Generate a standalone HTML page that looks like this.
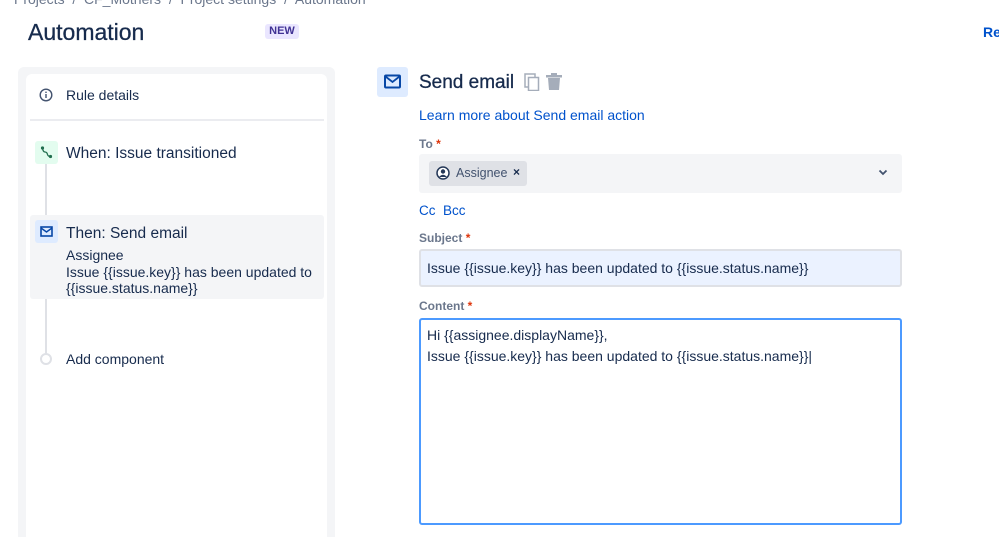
<!DOCTYPE html>
<html><head><meta charset="utf-8"><style>
*{box-sizing:border-box;margin:0;padding:0}
html,body{width:999px;height:537px;overflow:hidden}
body{background:#fff;font-family:"Liberation Sans",sans-serif;color:#172b4d;position:relative}
.a{position:absolute;white-space:nowrap}
.lbl{font-size:12px;font-weight:bold;color:#6b778c}
.lbl b{color:#de350b}
.link{color:#0052cc}
</style></head><body>
<div class="a" style="left:14px;top:-9px;font-size:14px;color:#6b778c">Projects &nbsp;/&nbsp; CF_Mothers &nbsp;/&nbsp; Project settings &nbsp;/&nbsp; Automation</div>
<div class="a" style="left:28px;top:19px;font-size:23px;font-weight:500;-webkit-text-stroke:0.3px #172b4d">Automation</div>
<div class="a" style="left:265px;top:24px;width:34px;height:15px;background:#eae6ff;border-radius:3px;font-size:11px;font-weight:bold;color:#403294;text-align:center;line-height:15px">NEW</div>
<div class="a link" style="left:983px;top:24px;font-size:14px;font-weight:bold">Re</div>

<div class="a" style="left:18px;top:67px;width:317px;height:470px;background:#f4f5f7;border-radius:6px 6px 0 0"></div>
<div class="a" style="left:26px;top:74px;width:301px;height:463px;background:#fff;border-radius:6px 6px 0 0"></div>
<svg class="a" style="left:39px;top:88px" width="14" height="14" viewBox="0 0 14 14"><circle cx="7" cy="7" r="5.8" fill="none" stroke="#42526e" stroke-width="1.4"/><rect x="6.3" y="6" width="1.4" height="4" fill="#42526e"/><rect x="6.3" y="3.6" width="1.4" height="1.4" fill="#42526e"/></svg>
<div class="a" style="left:66px;top:87px;font-size:14px">Rule details</div>
<div class="a" style="left:30px;top:119px;width:294px;height:2px;background:#ebecf0"></div>
<div class="a" style="left:45px;top:160px;width:2px;height:195px;background:#dfe1e6"></div>
<div class="a" style="left:35px;top:141px;width:23px;height:23px;background:#e3fcef;border-radius:3px"></div>
<svg class="a" style="left:35px;top:141px" width="23" height="23" viewBox="0 0 23 23"><path d="M7.5 7 Q8 11 10 11 Q12 11 12.5 13.5 Q13 15.5 15.5 15.5" fill="none" stroke="#216e4e" stroke-width="1.3"/><circle cx="7.5" cy="7" r="1.6" fill="#216e4e"/><circle cx="15.5" cy="15.5" r="1.6" fill="#216e4e"/></svg>
<div class="a" style="left:66px;top:145px;font-size:15.5px">When: Issue transitioned</div>
<div class="a" style="left:30px;top:215px;width:294px;height:84px;background:#f4f5f7;border-radius:3px"></div>
<div class="a" style="left:35px;top:220px;width:23px;height:23px;background:#deebff;border-radius:3px"></div>
<svg class="a" style="left:40px;top:226px" width="13" height="11" viewBox="0 0 13 11"><rect x="1" y="1" width="11" height="9" fill="none" stroke="#0747a6" stroke-width="1.6"/><path d="M1 2 L6.5 6 L12 2" fill="none" stroke="#0747a6" stroke-width="1.4"/></svg>
<div class="a" style="left:66px;top:225px;font-size:15.5px">Then: Send email</div>
<div class="a" style="left:66px;top:247px;font-size:14px;line-height:16.5px">Assignee<br>Issue {{issue.key}} has been updated to<br>{{issue.status.name}}</div>
<div class="a" style="left:40px;top:353px;width:12px;height:12px;border:2px solid #dfe1e6;border-radius:50%;background:#fff"></div>
<div class="a" style="left:66px;top:351px;font-size:14px">Add component</div>

<div class="a" style="left:377px;top:67px;width:31px;height:30px;background:#deebff;border-radius:3px"></div>
<svg class="a" style="left:384px;top:74px" width="17" height="15" viewBox="0 0 17 15"><rect x="1" y="1.5" width="15" height="12" rx="1" fill="none" stroke="#0747a6" stroke-width="2"/><path d="M1.5 2.5 L8.5 8 L15.5 2.5" fill="none" stroke="#0747a6" stroke-width="1.8"/></svg>
<div class="a" style="left:419px;top:72px;font-size:19px;font-weight:500;-webkit-text-stroke:0.3px #172b4d">Send email</div>
<svg class="a" style="left:524px;top:73px" width="16" height="18" viewBox="0 0 16 18"><rect x="1" y="1" width="10" height="13" fill="none" stroke="#a5adba" stroke-width="1.5"/><rect x="4.5" y="4.5" width="10" height="13" fill="#fff" stroke="#a5adba" stroke-width="1.5"/></svg>
<svg class="a" style="left:545px;top:73px" width="18" height="18" viewBox="0 0 18 18"><rect x="1" y="2" width="16" height="2.5" fill="#a5adba"/><rect x="6" y="0" width="6" height="2" fill="#a5adba"/><path d="M3 5 H15 L14 17 H4 Z" fill="#a5adba"/></svg>
<div class="a link" style="left:419px;top:107px;font-size:14px">Learn more about Send email action</div>
<div class="a lbl" style="left:419px;top:137px">To <b>*</b></div>
<div class="a" style="left:419px;top:154px;width:483px;height:39px;background:#f4f5f7;border-radius:3px"></div>
<div class="a" style="left:429px;top:161px;width:98px;height:25px;background:#dfe1e6;border-radius:3px"></div>
<svg class="a" style="left:436px;top:166px" width="14" height="14" viewBox="0 0 14 14"><circle cx="7" cy="7" r="6" fill="#fff" stroke="#253858" stroke-width="1.5"/><circle cx="7" cy="5.5" r="2.2" fill="#253858"/><path d="M3 11 Q7 6.5 11 11" fill="#253858"/></svg>
<div class="a" style="left:456px;top:166px;font-size:12.5px;color:#42526e">Assignee</div>
<div class="a" style="left:513px;top:165px;font-size:12px;font-weight:bold">×</div>
<svg class="a" style="left:878px;top:169px" width="10" height="7" viewBox="0 0 10 7"><path d="M1.5 1.5 L5 5 L8.5 1.5" fill="none" stroke="#42526e" stroke-width="1.8"/></svg>
<div class="a link" style="left:419px;top:203px;font-size:13.5px">Cc &nbsp;Bcc</div>
<div class="a lbl" style="left:419px;top:231px">Subject <b>*</b></div>
<div class="a" style="left:419px;top:249px;width:483px;height:38px;background:#ebf2ff;border:2px solid #dfe1e6;border-radius:3px"></div>
<div class="a" style="left:427px;top:260px;font-size:14px">Issue {{issue.key}} has been updated to {{issue.status.name}}</div>
<div class="a lbl" style="left:419px;top:299px">Content <b>*</b></div>
<div class="a" style="left:419px;top:318px;width:483px;height:207px;border:2px solid #4c9aff;border-radius:3px;background:#fff"></div>
<div class="a" style="left:427px;top:325px;font-size:14px;line-height:21px">Hi {{assignee.displayName}},<br>Issue {{issue.key}} has been updated to {{issue.status.name}}|</div>
</body></html>
